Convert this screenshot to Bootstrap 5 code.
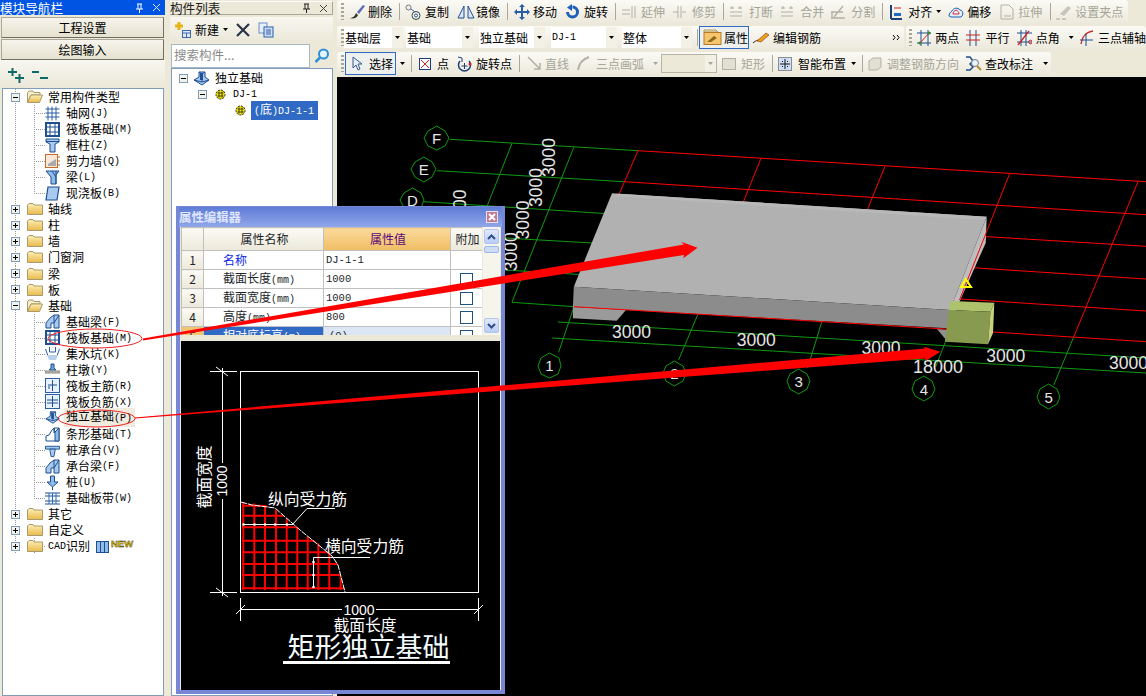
<!DOCTYPE html>
<html lang="zh-CN"><head><meta charset="utf-8"><title>构件</title>
<link href="https://cdn.jsdelivr.net/npm/bootstrap@5.3.0/dist/css/bootstrap.min.css" rel="stylesheet">
<style>
html,body{margin:0;height:696px;overflow:hidden}
body{background:#ece9d8;color:#000;font:12px/16px "Noto Sans CJK SC","Liberation Sans",sans-serif;position:relative}
.shell{width:1146px;height:696px}
.lt{font:10px/16px "Liberation Mono",monospace}
.g1{margin-left:1px}.g2{margin-left:2px}.g3{margin-left:3px}.g4{margin-left:4px}.g5{margin-left:5px}.g6{margin-left:6px}.g7{margin-left:7px}.g8{margin-left:8px}.g9{margin-left:9px}.g10{margin-left:10px}.g26{margin-left:26px}.g63{margin-left:63px}
.mt-tiny{margin-top:1px}
.leftp{width:165px;flex:none}.midp{width:163px;flex:none;margin-left:5px}.mainp{width:809px;flex:none;margin-left:4px}
.ttl{height:15px;background:#0054e3;color:#fff;font-size:12.6px;line-height:15px}
.ttl2{height:14px;margin-top:1px;background:#ece9d8;border:1px solid #a8a79c;border-top-color:#fff;border-left:0;color:#222;font-size:12.6px;line-height:12px}
.navb{height:21px;margin:2px 1px 0 1px;background:linear-gradient(#f6f4ec,#e6e2d0);border:1px solid #aca899;border-bottom-color:#716f64;border-right-color:#716f64;text-align:center;line-height:19px}
.navb+.navb{margin-top:1px}
.tools{height:28px;padding:2px 7px 0;background:linear-gradient(#f8f7f0,#ebe8d9)}
.tbox{background:#fff;border:1px solid #7f9db9;overflow:hidden;flex:1 1 0;min-height:0}
.lefttree{margin-left:2px;margin-right:1px}
.rw{height:16.05px;line-height:16px;display:flex;align-items:center;white-space:nowrap;background-repeat:no-repeat;
 background-image:repeating-linear-gradient(#9a9a9a 0 1px,transparent 1px 2px),repeating-linear-gradient(#9a9a9a 0 1px,transparent 1px 2px),repeating-linear-gradient(90deg,#9a9a9a 0 1px,transparent 1px 2px);
 background-size:1px 100%,1px 100%,11px 1px;background-position:12px 0,31px 0,31px 8px}
.rw>.lt{margin-top:2px}
.top{background-image:repeating-linear-gradient(#9a9a9a 0 1px,transparent 1px 2px);background-size:1px 100%;background-position:12px 0}
.endr{background-size:1px 100%,1px 9px,11px 1px}
.exp{margin-left:8px;margin-right:7px;flex:none}
.fo{margin-right:5px;flex:none}
.sub{padding-left:42px}.sub svg{margin-right:6px;flex:none}
.hl{background:#efecdf;padding-right:3px;margin-left:-2px;padding-left:2px}
.midtools{height:25px;margin-top:2px;padding:0}
.srch{height:25px;margin-top:1px}
.srchin{width:139px;margin-left:1px;height:24px;background:#fff;border:1px solid #a9b8c8;color:#8a8a8a;font-size:12.5px;line-height:20px;padding-left:2px}
.liw{margin-left:1px;padding-top:1px}
.lr{height:16px;line-height:16px;display:flex;align-items:center;white-space:nowrap}
.lr>.lt{margin-top:1px}
.sel{background:#316ac5;color:#fff;padding:0 3px;margin-left:5px;width:67px}
.tbar{height:25px;display:flex;align-items:center;white-space:nowrap;overflow:hidden;background:linear-gradient(#fbfaf5,#ebe8da);border-radius:3px;flex:none;padding-bottom:2px}
.tb1{width:791px}.tb2a{width:567px}.tb2b{width:240px;margin-left:2px}.tb3{width:714px;height:24px;padding-bottom:1px}
.grip{width:3px;height:17px;margin-left:4px;flex:none;background:repeating-linear-gradient(#a8a696 0 2px,transparent 2px 4px)}
.grip.grip-s{margin-left:3px}
.sepb{width:1px;height:17px;background:#aca899;flex:none}
.dis{color:#a6a598}
.carx{width:5px;height:3px;flex:none;background:#000;clip-path:polygon(0 0,100% 0,50% 100%)}
.carx.dis2{background:#a6a598}
.cmb{height:21px;display:flex;flex:none;background:#fff;padding-left:1px;line-height:21px;overflow:hidden}
.cmb b{font-weight:400;flex:1 1 0}
.cmb b.lt{line-height:21px}
.cmb i{width:11px;background:#f3f1e6;display:flex;align-items:center;justify-content:center}
.c59{width:59px}.c67{width:67px}.c66{width:66px}.c70{width:70px}
.cdis{width:56px;background:#ece9d8;border:1px solid #b7b5a6;height:19px}
.hb{height:23px;display:flex;align-items:center;flex:none;border:1px solid #316ac5;background:#eef0ee}
.hb50{width:50px;padding-left:3px}.hb51{width:51px;padding-left:6px}
.cad{flex:1 1 0;min-height:0;margin-top:1px;background:#000;overflow:hidden}
.cad svg{display:block}
.dlg{position:absolute;left:176px;top:206px;width:329px;height:488px;background:#ece9d8;border:4px solid #7787d6;border-top-width:1px;display:flex;flex-direction:column}
.dlgt{height:20px;flex:none;background:linear-gradient(#5f7cd6,#91a6ea);color:#dfe6fb;font-weight:700;font-size:12.4px;line-height:20px;margin:0 -1px;display:flex;align-items:center;justify-content:space-between}
.dlgx{width:12px;height:12px;background:#c47a90;border:1px solid #e9e3ef;margin-right:4px;display:flex;align-items:center;justify-content:center}
.gridw{height:108px;flex:none;display:flex;overflow:hidden;margin-left:1px}
.gridt{width:301px;flex:none;overflow:hidden;background:#fff}
table.pt{margin:0;width:301px;table-layout:fixed;border-collapse:collapse;--bs-table-bg:transparent}
table.pt td,table.pt th{padding:0 0 0 2px;border:1px solid #c0c0c0;font-weight:400;height:19px;line-height:14px;overflow:hidden;white-space:nowrap;background:#fff;vertical-align:middle}
table.pt .lt{line-height:14px}
table.pt thead th{height:23px;text-align:center;background:linear-gradient(#fbfaf4,#ece8da);font-size:12px}
table.pt thead th.val{background:linear-gradient(#fadb9c,#f1bd63);color:#5c0b7a}
table.pt td.nm{background:linear-gradient(#fbfaf4,#ece8da);text-align:center;padding:0}
table.pt td.onm{background:#f2c46f;text-align:center;padding:0}
table.pt .nameb{color:#0b28e8;padding-left:19px}
table.pt .lab{padding-left:19px}
table.pt td.seln{background:#316ac5;color:#fff;padding-left:19px}
table.pt td.selv{background:#dce6f4;padding-left:5px}
table.pt td.ck{padding:0}
table.pt td.lt{font-size:10.5px}
.cbx{display:block;margin:0 auto;width:13px;height:13px;border:1px solid #1c5180;background:#fff}
.cn{width:22px}.cm{width:120px}.cv{width:127px}.cx{width:32px}
.scrl{width:17px;flex:none;background:#f6f5ec;display:flex;flex-direction:column;padding:2px 1px;margin-left:1px}
.sbtn{height:15px;background:linear-gradient(#e1e9fb,#b9cdf5);border:1px solid #b2c5ee;border-radius:2px;display:flex;align-items:center;justify-content:center;flex:none}
.sthm{height:7px;margin-top:2px;background:#cfdcf8;border:1px solid #9db5e8;border-radius:2px;flex:none}
.dlgpic{flex:1 1 0;min-height:0;margin:6px 1px 0 1px;background:#000;overflow:hidden;width:319px}
.over{position:absolute;left:0;top:0;pointer-events:none}
</style></head>
<body>
<svg width="0" height="0" class="position-absolute">
<defs>
<linearGradient id="fg" x1="0" y1="0" x2="0" y2="1"><stop offset="0" stop-color="#fdf0b8"/><stop offset="1" stop-color="#e9b94a"/></linearGradient>
<symbol id="plus" viewBox="0 0 9 9"><rect x=".5" y=".5" width="8" height="8" fill="#f3f3ec" stroke="#7f9db9"/><path d="M2 4.5h5M4.5 2v5" stroke="#000"/></symbol>
<symbol id="minus" viewBox="0 0 9 9"><rect x=".5" y=".5" width="8" height="8" fill="#f3f3ec" stroke="#7f9db9"/><path d="M2 4.5h5" stroke="#000"/></symbol>
<symbol id="fc" viewBox="0 0 16 14"><path d="M.5 3V12.5H15.5V3H7L6 1.5H2L.5 3Z" fill="url(#fg)" stroke="#a89a6a"/></symbol>
<symbol id="fop" viewBox="0 0 16 14"><path d="M.5 2.5 2 1h4l1 1.5h6V5H4L.5 12.5Z" fill="#f6eec8" stroke="#a89a6a"/><path d="M.5 12.5 4 5H15.5L12.5 12.5Z" fill="url(#fg)" stroke="#a89a6a"/></symbol>
<symbol id="i-grid" viewBox="0 0 15 15"><path d="M.5 3h14M.5 7h14M.5 11h14M3 .5v14M7 .5v14M11 .5v14" stroke="#2a5da8" fill="none"/></symbol>
<symbol id="i-raft" viewBox="0 0 15 15"><rect x="1" y="1" width="13" height="13" fill="#fff" stroke="#1d4f91" stroke-width="2"/><path d="M5 1v13M10 1v13M1 5h13M1 10h13" stroke="#1d4f91"/></symbol>
<symbol id="i-col" viewBox="0 0 15 15"><path d="M1 1h13v3l-4 2v8H5V6L1 4Z" fill="#a8caee" stroke="#1d4f91"/><path d="M1 3.500h13" stroke="#1d4f91"/></symbol>
<symbol id="i-wall" viewBox="0 0 15 15"><rect x=".5" y=".5" width="12" height="13" fill="#f7e8da" stroke="#c96a2a"/><path d="M3 10l8-5v7H3Z" fill="#aaa"/><path d="M13 3h2M13 7h2M13 11h2" stroke="#c96a2a"/></symbol>
<symbol id="i-beam" viewBox="0 0 15 15"><path d="M1 1h13L11 5v9H6V7Z" fill="#8fbce8" stroke="#1d4f91"/><path d="M11 1v13M7 1l4 6" stroke="#1d4f91"/></symbol>
<symbol id="i-slab" viewBox="0 0 15 15"><path d="M3 1h11l-2 13H1Z" fill="#a8caee" stroke="#1d4f91" stroke-width="1.200"/></symbol>
<symbol id="i-fb" viewBox="0 0 15 15"><path d="M1 14V9L5 4 9 1h5v13H9V9H6v5Z" fill="#a8caee" stroke="#1d4f91"/><path d="M9 1v8M14 1 9 9" stroke="#1d4f91"/></symbol>
<symbol id="i-pit" viewBox="0 0 15 15"><path d="M.5 3 3 10h9l2.500-7M4.500 1v5h6V1" fill="none" stroke="#2a5da8"/><path d="M2 9h11l-2 5H4Z" fill="#b7d0ee"/></symbol>
<symbol id="i-pier" viewBox="0 0 15 15"><path d="M6 2h3v4l2 2H4l2-2Z" fill="#6ea3da" stroke="#1d4f91"/><path d="M0 9h15v2H0Z" fill="#c2c0b0" stroke="#8a8a80"/></symbol>
<symbol id="i-mr" viewBox="0 0 15 15"><rect x=".5" y=".5" width="14" height="14" fill="#e7f0fb" stroke="#2a5da8"/><path d="M7.500 2v11M3 7h9M4 11V8" stroke="#1d4f91" fill="none"/></symbol>
<symbol id="i-nr" viewBox="0 0 15 15"><rect x=".5" y=".5" width="14" height="14" fill="#e7f0fb" stroke="#2a5da8"/><path d="M7.500 2v11M2 6h11M2 9h11" stroke="#1d4f91"/></symbol>
<symbol id="i-iso" viewBox="0 0 17 15"><path d="M1 9 6 6v-5h6v5l4 3-7 5Z" fill="#a8caee" stroke="#1d4f91"/><path d="M6 1l3 2 3-2M9 3v8M1 9l8 2 7-2" stroke="#1d4f91" fill="none"/><path d="M7 2h3v7H7Z" fill="#1d4f91"/></symbol>
<symbol id="i-str" viewBox="0 0 15 15"><path d="M1 14V9L4 8 7 3 9 1h5v13H1" fill="#fff" stroke="#1d4f91"/><path d="M9 1v5l5-5v13h-4V6Z" fill="#8fbce8" stroke="#1d4f91"/></symbol>
<symbol id="i-pc" viewBox="0 0 16 15"><path d="M.5 3h15v3H.5Z" fill="#a8caee" stroke="#1d4f91"/><path d="M5 6h6L9.500 14h-3Z" fill="#a8caee" stroke="#1d4f91"/></symbol>
<symbol id="i-pile" viewBox="0 0 15 15"><path d="M5.500 1h4v6H13l-5.500 5L2 7h3.500Z" fill="#8fbce8" stroke="#1d4f91"/><path d="M7.500 12v3" stroke="#1d4f91"/></symbol>
<symbol id="i-band" viewBox="0 0 15 15"><path d="M0 2h15M0 13h15M0 5h15M0 10h15" stroke="#1d4f91"/><path d="M4 2v11M7.500 2v11M11 2v11" stroke="#2a6ab8"/></symbol>
<symbol id="gear" viewBox="0 0 11 11"><circle cx="5.500" cy="5.500" r="4.500" fill="#f6e800" stroke="#222" stroke-dasharray="2 1"/><path d="M2.500 4h6M2.500 7h6M4 2.500v6M7 2.500v6" stroke="#222" stroke-width=".8"/></symbol>
</defs></svg>

<div class="shell d-flex">
 <div class="leftp d-flex flex-column">
  <div class="ttl d-flex justify-content-between"><span>模块导航栏</span>
   <span class="d-flex align-items-center gap-2 pe-1"><svg width="9" height="10"><path d="M2 1h5M3 1v5M6 1v5M1 6h7M4.500 6v4" stroke="#fff"/></svg><svg width="9" height="9"><path d="M1 1l7 7M8 1 1 8" stroke="#dfe9fb"/></svg></span></div>
  <div class="navb">工程设置</div>
  <div class="navb">绘图输入</div>
  <div class="tools d-flex align-items-center gap-2">
   <svg width="17" height="16"><path d="M1 5h9M5.500 1v8M8 11h9M12.500 7v9" stroke="#0d6a6a" stroke-width="2"/></svg>
   <svg width="16" height="16"><path d="M0 5h7M8 11h8" stroke="#0d6a6a" stroke-width="2"/></svg>
  </div>
  <div class="tbox lefttree">
   <div class="rw top"><svg class="exp" width="9" height="9"><use href="#minus"/></svg><svg class="fo" width="16" height="14"><use href="#fop"/></svg>常用构件类型</div>
   <div class="rw sub"><svg width="15" height="15"><use href="#i-grid"/></svg>轴网<span class="lt">(J)</span></div>
   <div class="rw sub"><svg width="15" height="15"><use href="#i-raft"/></svg>筏板基础<span class="lt">(M)</span></div>
   <div class="rw sub"><svg width="15" height="15"><use href="#i-col"/></svg>框柱<span class="lt">(Z)</span></div>
   <div class="rw sub"><svg width="15" height="15"><use href="#i-wall"/></svg>剪力墙<span class="lt">(Q)</span></div>
   <div class="rw sub"><svg width="15" height="15"><use href="#i-beam"/></svg>梁<span class="lt">(L)</span></div>
   <div class="rw sub endr"><svg width="15" height="15"><use href="#i-slab"/></svg>现浇板<span class="lt">(B)</span></div>
   <div class="rw top"><svg class="exp" width="9" height="9"><use href="#plus"/></svg><svg class="fo" width="16" height="14"><use href="#fc"/></svg>轴线</div>
   <div class="rw top"><svg class="exp" width="9" height="9"><use href="#plus"/></svg><svg class="fo" width="16" height="14"><use href="#fc"/></svg>柱</div>
   <div class="rw top"><svg class="exp" width="9" height="9"><use href="#plus"/></svg><svg class="fo" width="16" height="14"><use href="#fc"/></svg>墙</div>
   <div class="rw top"><svg class="exp" width="9" height="9"><use href="#plus"/></svg><svg class="fo" width="16" height="14"><use href="#fc"/></svg>门窗洞</div>
   <div class="rw top"><svg class="exp" width="9" height="9"><use href="#plus"/></svg><svg class="fo" width="16" height="14"><use href="#fc"/></svg>梁</div>
   <div class="rw top"><svg class="exp" width="9" height="9"><use href="#plus"/></svg><svg class="fo" width="16" height="14"><use href="#fc"/></svg>板</div>
   <div class="rw top"><svg class="exp" width="9" height="9"><use href="#minus"/></svg><svg class="fo" width="16" height="14"><use href="#fop"/></svg>基础</div>
   <div class="rw sub"><svg width="15" height="15"><use href="#i-fb"/></svg>基础梁<span class="lt">(F)</span></div>
   <div class="rw sub"><svg width="15" height="15"><use href="#i-raft"/></svg>筏板基础<span class="lt">(M)</span></div>
   <div class="rw sub"><svg width="15" height="15"><use href="#i-pit"/></svg>集水坑<span class="lt">(K)</span></div>
   <div class="rw sub"><svg width="15" height="15"><use href="#i-pier"/></svg>柱墩<span class="lt">(Y)</span></div>
   <div class="rw sub"><svg width="15" height="15"><use href="#i-mr"/></svg>筏板主筋<span class="lt">(R)</span></div>
   <div class="rw sub"><svg width="15" height="15"><use href="#i-nr"/></svg>筏板负筋<span class="lt">(X)</span></div>
   <div class="rw sub"><svg width="15" height="15"><use href="#i-iso"/></svg><span class="hl">独立基础<span class="lt">(P)</span></span></div>
   <div class="rw sub"><svg width="15" height="15"><use href="#i-str"/></svg>条形基础<span class="lt">(T)</span></div>
   <div class="rw sub"><svg width="15" height="15"><use href="#i-pc"/></svg>桩承台<span class="lt">(V)</span></div>
   <div class="rw sub"><svg width="15" height="15"><use href="#i-fb"/></svg>承台梁<span class="lt">(F)</span></div>
   <div class="rw sub"><svg width="15" height="15"><use href="#i-pile"/></svg>桩<span class="lt">(U)</span></div>
   <div class="rw sub endr"><svg width="15" height="15"><use href="#i-band"/></svg>基础板带<span class="lt">(W)</span></div>
   <div class="rw top"><svg class="exp" width="9" height="9"><use href="#plus"/></svg><svg class="fo" width="16" height="14"><use href="#fc"/></svg>其它</div>
   <div class="rw top"><svg class="exp" width="9" height="9"><use href="#plus"/></svg><svg class="fo" width="16" height="14"><use href="#fc"/></svg>自定义</div>
   <div class="rw"><svg class="exp" width="9" height="9"><use href="#plus"/></svg><svg class="fo" width="16" height="14"><use href="#fc"/></svg><span class="lt">CAD</span>识别<svg class="g6" width="38" height="16" viewBox="0 0 38 16"><rect x=".5" y="3.500" width="12" height="11" fill="#8fbce8" stroke="#1d4f91"/><path d="M4.500 4v10M8.500 4v10" stroke="#1d4f91"/><text x="15" y="9" font-family="Liberation Sans" font-size="9.500" font-weight="700" fill="#ffd800" stroke="#000" stroke-width=".35">NEW</text></svg></div>
  </div>
 </div>

 <div class="midp d-flex flex-column">
  <div class="ttl2 d-flex justify-content-between"><span>构件列表</span>
   <span class="d-flex align-items-center gap-2 pe-1"><svg width="9" height="10"><path d="M2 1h5M3 1v5M6 1v5M1 6h7M4.500 6v4" stroke="#222"/></svg><svg width="9" height="9"><path d="M1 1l7 7M8 1 1 8" stroke="#444"/></svg></span></div>
  <div class="d-flex align-items-center tools midtools">
   <svg class="ms-1" width="17" height="16"><path d="M1 4h8M5 0v8" stroke="#e4b514" stroke-width="3"/><rect x="8.500" y="8.500" width="8" height="7" fill="#dfe9f8" stroke="#3a68a8"/><path d="M9 11h7M12.500 11v4" stroke="#3a68a8"/></svg>
   <span class="ms-1">新建</span><span class="carx ms-1"></span>
   <svg class="ms-2" width="14" height="14"><path d="M1 1l12 12M13 1 1 13" stroke="#2a3348" stroke-width="2.200"/></svg>
   <svg class="ms-2" width="16" height="16"><rect x="1" y="1" width="8" height="10" fill="#e7effb" stroke="#6b8fc2"/><rect x="6" y="5" width="9" height="10" fill="#cfe0f6" stroke="#2a5da8"/><path d="M8 8h5M8 10h5M8 12h5" stroke="#2a5da8"/></svg>
  </div>
  <div class="srch d-flex align-items-center"><div class="srchin">搜索构件...</div>
   <svg class="ms-1" width="16" height="16"><circle cx="9.500" cy="6" r="4.500" fill="#e6f4ff" stroke="#2d8fd6" stroke-width="2"/><path d="M6 9.500 1.500 14" stroke="#2d8fd6" stroke-width="2.500"/></svg></div>
  <div class="tbox liw">
   <div class="lr"><svg class="g7" width="9" height="9"><use href="#minus"/></svg><svg class="g5" width="17" height="15"><use href="#i-iso"/></svg><span class="g5">独立基础</span></div>
   <div class="lr"><svg class="g26" width="9" height="9"><use href="#minus"/></svg><svg class="g8" width="11" height="11"><use href="#gear"/></svg><span class="lt g7">DJ-1</span></div>
   <div class="lr"><svg class="g63" width="11" height="11"><use href="#gear"/></svg><span class="sel"><span class="lt">(</span>底<span class="lt">)DJ-1-1</span></span></div>
  </div>
 </div>

 <div class="mainp d-flex flex-column">
  <div class="tbar tb1">
   <span class="grip"></span>
   <svg class="g4" width="17" height="17"><path d="M1 15c4 0 6-2 7-5l2 2c-1 3-4 4-9 3Z" fill="#333"/><path d="M9 9 15 2l2 1-6 8Z" fill="#5a6fb8"/></svg><span class="g3">删除</span>
   <span class="sepb g7"></span>
   <svg class="g5" width="16" height="16"><circle cx="3.500" cy="3.500" r="2.500" fill="none" stroke="#777"/><circle cx="11" cy="11.500" r="4" fill="none" stroke="#444"/><path d="M6 5l4 3" stroke="#2a5da8"/><circle cx="11" cy="11.500" r="1.500" fill="none" stroke="#2a5da8"/></svg><span class="g4">复制</span>
   <svg class="g8" width="18" height="16"><path d="M7 2v12H1ZM11 2v12h6Z" fill="#dbe7f7" stroke="#1d4f91"/></svg><span class="g1">镜像</span>
   <span class="sepb g7"></span>
   <svg class="g6" width="16" height="16"><path d="M8 0 11 3H9v4h4V5l3 3-3 3V9H9v4h2l-3 3-3-3h2V9H3v2L0 8l3-3v2h4V3H5Z" fill="#2a5da8"/></svg><span class="g3">移动</span>
   <svg class="g9" width="13" height="16"><path d="M6.500 3a5 5 0 1 1-5 5" fill="none" stroke="#1d5fb8" stroke-width="3"/><path d="M6 0v7L1 3.500Z" fill="#1d5fb8"/></svg><span class="g5">旋转</span>
   <span class="sepb g7"></span>
   <svg class="g6" width="14" height="14"><path d="M0 5h8M0 9h8M10 1v12M13 1v12" stroke="#b3b1a4" fill="none"/></svg><span class="g5 dis">延伸</span>
   <svg class="g8" width="13" height="14"><path d="M5 1v12M8 1v12M0 7h5M9 7h4" stroke="#b3b1a4"/></svg><span class="g6 dis">修剪</span>
   <span class="sepb g7"></span>
   <svg class="g5" width="14" height="14"><path d="M1 3h4M9 3h4M1 7h12M1 11h12M3 1v3M11 1v3" stroke="#b3b1a4"/></svg><span class="g6 dis">打断</span>
   <svg class="g7" width="14" height="14"><path d="M1 3h4M9 3h4M1 7h12M1 11h12M3 1v3M11 1v3" stroke="#b3b1a4"/></svg><span class="g6 dis">合并</span>
   <svg class="g6" width="16" height="14"><path d="M1 13h14M1 7h12M2 7v6M13 1 4 12" stroke="#b3b1a4" stroke-width="1.300"/></svg><span class="g5 dis">分割</span>
   <span class="sepb g7"></span>
   <svg class="g7" width="12" height="16"><path d="M1 1v14M1 15h11" stroke="#1d3f7a" stroke-width="2"/><rect x="4" y="9" width="7" height="3" fill="#1d6ac0"/><path d="M4 4h7" stroke="#c22"/></svg><span class="g6">对齐</span><span class="carx g4"></span>
   <svg class="g7" width="16" height="14"><path d="M1 11c0-3 2-4 3-5 1-3 6-4 8-1 3 0 4 5 1 7H3Z" fill="#dff0fb" stroke="#1d5fb8"/><path d="M5 9c0-2 1-3 3-4 2 1 3 2 3 4Z" fill="none" stroke="#d23"/></svg><span class="g3">偏移</span>
   <svg class="g9" width="15" height="16"><path d="M1 1h8l4 4v10H1Z" fill="none" stroke="#b3b1a4"/><path d="M4 12h7" stroke="#b3b1a4"/></svg><span class="g3 dis">拉伸</span>
   <span class="sepb g8"></span>
   <svg class="g5" width="16" height="16"><path d="M4 10 12 2l3 2-7 8Z" fill="#c8c6b8"/><path d="M0 15h4M6 15h4" stroke="#a6a598"/></svg><span class="g3 dis">设置夹点</span>
  </div>
  <div class="d-flex mt-tiny">
   <div class="tbar tb2a">
    <span class="grip"></span>
    <span class="cmb c59"><b>基础层</b><i><span class="carx"></span></i></span>
    <span class="cmb c67 g3"><b>基础</b><i><span class="carx"></span></i></span>
    <span class="cmb c66 g6"><b>独立基础</b><i><span class="carx"></span></i></span>
    <span class="cmb c66 g6"><b class="lt">DJ-1</b><i><span class="carx"></span></i></span>
    <span class="cmb c70 g5"><b>整体</b><i><span class="carx"></span></i></span>
    <span class="sepb g5"></span>
    <span class="hb hb50 g1"><svg width="19" height="17"><path d="M1 1h12l2 2H1Z" fill="#f4e6b0" stroke="#a89a6a"/><rect x="1" y="3.500" width="17" height="12" fill="#f7c56b" stroke="#b07a28"/><path d="M4 13 11 7l3 2-6 4Z" fill="#8a6a20"/></svg><span class="g2">属性</span></span>
    <svg class="g4" width="17" height="14"><path d="M0 12c3-3 6-3 8-3" stroke="#222" fill="none"/><path d="M4 10 13 2l3 2-8 7Z" fill="#e4a21c" stroke="#a02a10" stroke-width=".6"/></svg><span class="g3">编辑钢筋</span>
    <svg class="ms-auto me-1" width="8" height="7"><path d="M1 1l2 2.500-2 2.500M5 1l2 2.500-2 2.500" stroke="#000" fill="none"/></svg>
   </div>
   <div class="tbar tb2b">
    <span class="grip grip-s"></span>
    <svg class="g5" width="15" height="16"><path d="M4 0v16M11 0v16M0 3h15M0 13h15" stroke="#1d4f91"/><path d="M2 14 13 2" stroke="#c22"/><circle cx="3" cy="13" r="1.600" fill="#3a8a2a"/><circle cx="12" cy="3" r="1.600" fill="#3a8a2a"/></svg><span class="g4">两点</span>
    <svg class="g7" width="14" height="16"><path d="M4 0v16M10 0v16" stroke="#1d4f91"/><path d="M0 5h14M0 10h14" stroke="#c22"/></svg><span class="g6">平行</span>
    <svg class="g7" width="16" height="16"><path d="M4 0v16M9 0v16M0 3h15M0 12h15" stroke="#1d4f91"/><path d="M1 15 12 1" stroke="#c22" stroke-width="1.300"/><circle cx="13.500" cy="12" r="1.800" fill="none" stroke="#c22"/></svg><span class="g4">点角</span>
    <span class="carx g9"></span>
    <svg class="g6" width="14" height="16"><path d="M1 14C2 6 6 2 13 1" fill="none" stroke="#c22" stroke-width="1.300"/><path d="M6 4v12M0 10h14" stroke="#1d4f91"/></svg><span class="g5">三点辅轴</span>
   </div>
  </div>
  <div class="tbar tb3 mt-tiny">
   <span class="grip"></span>
   <span class="hb hb51 g1"><svg width="11" height="15"><path d="M1 1v11l3-3 2 5 2-1-2-5h4Z" fill="#e9eef7" stroke="#3a5a90"/></svg><span class="g6">选择</span></span>
   <span class="carx g4"></span><span class="sepb g6"></span>
   <svg class="g7" width="12" height="12"><rect x=".5" y=".5" width="11" height="11" fill="#fff" stroke="#1d3f7a"/><path d="M2 2l8 8M10 2l-8 8" stroke="#c22"/></svg><span class="g6">点</span>
   <svg class="g8" width="15" height="16"><path d="M3 5a6 6 0 1 0 9 0" fill="none" stroke="#1d3f7a" stroke-width="1.500"/><path d="M7.500 7v6M4.500 10h6" stroke="#1d3f7a"/><path d="M1 1l4 1v4" fill="none" stroke="#1d3f7a"/><circle cx="13" cy="8" r="1.500" fill="#c22"/></svg><span class="g4">旋转点</span>
   <span class="sepb g7"></span>
   <svg class="g7" width="15" height="15"><path d="M1 1 13 13M13 7v6H7" fill="none" stroke="#b3b1a4" stroke-width="1.500"/></svg><span class="g3 dis">直线</span>
   <svg class="g8" width="13" height="15"><path d="M1 14C2 7 6 3 12 1" fill="none" stroke="#b3b1a4" stroke-width="2"/></svg><span class="g6 dis">三点画弧</span>
   <span class="carx dis2 g9"></span>
   <span class="cmb cdis g3"><b></b><i><span class="carx dis2"></span></i></span>
   <svg class="g5" width="14" height="12"><rect x=".5" y=".5" width="13" height="11" fill="#e2e0d2" stroke="#b3b1a4"/></svg><span class="g5 dis">矩形</span>
   <span class="sepb g7"></span>
   <svg class="g5" width="14" height="14"><rect x=".5" y=".5" width="13" height="13" fill="#cfe0f6" stroke="#333" stroke-dasharray="1 1"/><path d="M7 2v10M2 7h10M4 4l1 1M10 4 9 5M4 10l1-1M10 10 9 9" stroke="#111"/></svg><span class="g6">智能布置</span>
   <span class="carx g5"></span><span class="sepb g6"></span>
   <svg class="g5" width="14" height="14"><path d="M1 4 5 1h8v9l-4 3H1Z" fill="#e2e0d2" stroke="#b3b1a4"/></svg><span class="g5 dis">调整钢筋方向</span>
   <svg class="g6" width="17" height="16"><path d="M1 1h4l3 4-3 3 3 3-3 3H1" fill="none" stroke="#1d4f91" stroke-width="1.500"/><circle cx="10" cy="7" r="3.500" fill="#e7f4fb" stroke="#777"/><path d="M12 10l4 4" stroke="#b08a30" stroke-width="2"/></svg><span class="g3">查改标注</span>
   <span class="carx g10"></span>
  </div>
  <div class="cad">
   <svg width="809" height="619" viewBox="337 77 809 619" font-family="Liberation Sans, sans-serif">
    <g fill="none" stroke="#0f9a12">
     <path d="M450 139.300 638 150.700M437 170.700 624 181.700M424 201.700 612 214M505 238 601 243.500M505 270 588 275M512 302.300 574 306.700"/>
     <path d="M512 143.300 478 229M573.800 147.300 512 302M574 306.700 558.600 352.300M697.600 315 678.600 360M821.400 323 807.600 368M950 330 935.700 366.700M1073.800 336.700 1053.800 385"/>
     <path d="M558 322 1146 358M552 338 1146 373"/>
     <g fill="#000">
      <path d="M549.500 353 559 358 561 366 558 374 549.500 378 541 374 538 366 541 358Z"/>
      <path d="M674.300 361 683 366 686 373 683 381 674.300 386 666 381 663 373 666 366Z"/>
      <path d="M798.600 369 807 374 810 381 807 389 798.600 394 790 389 787 381 790 374Z"/>
      <path d="M923.800 376 932 381 935 389 932 396 923.800 401 915 396 912 389 915 381Z"/>
      <path d="M1048.600 384 1057 389 1060 397 1057 404 1048.600 409 1040 404 1037 397 1040 389Z"/>
      <path d="M436.700 126 445 131 449 138 445 146 436.700 150 428 146 424 138 428 131Z"/>
      <path d="M423.800 157 432 162 436 169 432 177 423.800 182 415 177 411 169 415 162Z"/>
      <path d="M412.400 188 421 193 424 200 421 208 412.400 213 404 208 400 200 404 193Z"/>
     </g>
    </g>
    <g fill="none" stroke="#f00">
     <path d="M638 150.700 1146 181.700M624 181.700 1146 214.700M612 214 1146 246.300M601 243.500 1146 279M588 275 1146 311"/>
     <path d="M638 150.700 610 215M761 158.300 697.600 315M884.800 166.700 821.400 323M1138 181.700 1073.800 336.700"/>
    </g>
    <path d="M612 193.300 986.700 216.700 950 310 573.800 286.700Z" fill="#b1b1b1"/>
    <path d="M618 193.700 986.700 216.700 984 220 612 196Z" fill="#b8b8b8"/>
    <path d="M573.800 286.700 950 310 947.600 328.300 572.900 307Z" fill="#8c8c8c"/>
    <path d="M572.900 307 626 310 616.700 320.700 572.900 318.300Z" fill="#9a9a9a"/>
    <path d="M986.700 216.700 985.700 243 950 323 950 310Z" fill="#bdbdbd"/>
    <path d="M937 329 950 330 947.600 341.700Z" fill="#909090"/>
    <path d="M574 306.700 950 329.300M1009.500 174 959.500 300M950 329.300 1146 341.700" fill="none" stroke="#f00"/>
    <path d="M951 301 994.300 302.700 990.500 311.700 948.600 310Z" fill="#adc36b"/>
    <path d="M948.600 310 990.500 311.700 988 344.300 945 341.700Z" fill="#879a4f"/>
    <path d="M994.300 302.700 993 333 988 344.300 990.500 311.700Z" fill="#c6d47e"/>
    <path d="M965.700 279 961 287 971 287Z" fill="none" stroke="#ffff00" stroke-width="2"/>
    <g fill="#e6e6e6" font-size="18" text-anchor="middle">
     <text x="631.400" y="338" textLength="39" lengthAdjust="spacingAndGlyphs">3000</text>
     <text x="756.200" y="345.500" textLength="39" lengthAdjust="spacingAndGlyphs">3000</text>
     <text x="881" y="353.500" textLength="39" lengthAdjust="spacingAndGlyphs">3000</text>
     <text x="1005.700" y="361.500" textLength="39" lengthAdjust="spacingAndGlyphs">3000</text>
     <text x="1128.600" y="369" textLength="39" lengthAdjust="spacingAndGlyphs">3000</text>
     <text x="938" y="373" textLength="50" lengthAdjust="spacingAndGlyphs">18000</text>
     <text transform="translate(554.500 157.500) rotate(-90)" textLength="39" lengthAdjust="spacingAndGlyphs">3000</text>
     <text transform="translate(541.500 187.500) rotate(-90)" textLength="39" lengthAdjust="spacingAndGlyphs">3000</text>
     <text transform="translate(528.500 220) rotate(-90)" textLength="39" lengthAdjust="spacingAndGlyphs">3000</text>
     <text transform="translate(517 251.700) rotate(-90)" textLength="39" lengthAdjust="spacingAndGlyphs">3000</text>
     <text transform="translate(466 209) rotate(-90)" textLength="39" lengthAdjust="spacingAndGlyphs">3000</text>
    </g>
    <g fill="#e6e6e6" font-size="15" text-anchor="middle">
     <text x="549.500" y="371">1</text><text x="674.300" y="379">2</text><text x="798.600" y="387">3</text><text x="923.800" y="395">4</text><text x="1048.600" y="403">5</text>
     <text x="436.700" y="143.500">F</text><text x="423.800" y="174.500">E</text><text x="412.400" y="205.500">D</text>
    </g>
   </svg>
  </div>
 </div>
</div>

<div class="dlg">
 <div class="dlgt"><span>属性编辑器</span><span class="dlgx"><svg width="8" height="8"><path d="M1 1l6 6M7 1 1 7" stroke="#fff" stroke-width="2"/></svg></span></div>
 <div class="gridw">
  <div class="gridt">
   <table class="table pt">
    <colgroup><col class="cn"><col class="cm"><col class="cv"><col class="cx"></colgroup>
    <thead><tr><th></th><th>属性名称</th><th class="val">属性值</th><th>附加</th></tr></thead>
    <tbody>
     <tr><td class="nm">1</td><td class="nameb">名称</td><td class="lt">DJ-1-1</td><td></td></tr>
     <tr><td class="nm">2</td><td class="lab">截面长度<span class="lt">(mm)</span></td><td class="lt">1000</td><td class="ck"><span class="cbx"></span></td></tr>
     <tr><td class="nm">3</td><td class="lab">截面宽度<span class="lt">(mm)</span></td><td class="lt">1000</td><td class="ck"><span class="cbx"></span></td></tr>
     <tr><td class="nm">4</td><td class="lab">高度<span class="lt">(mm)</span></td><td class="lt">800</td><td class="ck"><span class="cbx"></span></td></tr>
     <tr><td class="onm">5</td><td class="seln">相对底标高<span class="lt">(m)</span></td><td class="selv lt">(0)</td><td class="ck"><span class="cbx"></span></td></tr>
    </tbody>
   </table>
  </div>
  <div class="scrl">
   <span class="sbtn"><svg width="9" height="6"><path d="M1 5l3.500-3.500L8 5" fill="none" stroke="#2f4c8c" stroke-width="2"/></svg></span>
   <span class="sthm"></span>
   <span class="sbtn mt-auto"><svg width="9" height="6"><path d="M1 1l3.500 3.500L8 1" fill="none" stroke="#2f4c8c" stroke-width="2"/></svg></span>
  </div>
 </div>
 <div class="dlgpic">
  <svg width="319" height="349" viewBox="181 341 319 349" font-family="Liberation Sans, Noto Sans CJK SC, sans-serif">
   <rect x="240.500" y="371.500" width="238" height="221" fill="none" stroke="#fff"/>
   <defs><clipPath id="hc"><path d="M242 502 265 505 275 509 298 528 308 537 318 543 332 555 338 565 345 591H242Z"/></clipPath></defs>
   <g clip-path="url(#hc)" stroke="#f00" stroke-width="2">
    <path d="M243.300 500V590M254.300 500V590M265 500V590M276 500V590M286.700 500V590M297.300 500V590M307.700 500V590M318.300 500V590M329.300 500V590M340.700 500V590"/>
    <path d="M242 505.700H346M242 515.700H346M242 527.300H346M242 540.700H346M242 552.300H346M242 564H346M242 575H346M242 588.300H346"/>
   </g>
   <path d="M241 502 252 505 275 508 300 530 332 556 338 565 345 592" fill="none" stroke="#fff" stroke-dasharray="6 1"/>
   <path d="M243 524.500H292M292 525 307 508.500H335M313.500 588V557.500H370" fill="none" stroke="#fff"/>
   <g fill="#fff"><circle cx="243.500" cy="524.500" r="1.300"/><circle cx="254.500" cy="524.500" r="1.300"/><circle cx="265" cy="524.500" r="1.300"/><circle cx="275" cy="524.500" r="1.300"/><circle cx="287" cy="524.500" r="1.300"/><circle cx="313.500" cy="562" r="1.300"/><circle cx="313.500" cy="575" r="1.300"/><circle cx="313.500" cy="587" r="1.300"/></g>
   <path d="M222.500 368V596M210 371.500H237M210 592.500H237M216 367l12 9M216 588l12 9M240.500 598V621M478.500 598V621M240.500 609.500H478.500M236 614l9-9M474 614l9-9" fill="none" stroke="#fff"/>
   <rect x="342" y="601" width="34" height="16" fill="#000"/>
   <rect x="214" y="463" width="16" height="36" fill="#000"/>
   <g fill="#fff" text-anchor="middle">
    <text x="359" y="614.500" font-size="14">1000</text>
    <text transform="translate(227 481) rotate(-90)" font-size="14">1000</text>
    <text x="365" y="631" font-size="15.800">截面长度</text>
    <text transform="translate(210 477) rotate(-90)" font-size="15.800">截面宽度</text>
    <text x="307.500" y="505" font-size="15.800">纵向受力筋</text>
    <text x="364.500" y="552" font-size="15.800">横向受力筋</text>
    <text x="368.500" y="657" font-size="27" fill="#f2fbff">矩形独立基础</text>
   </g>
   <rect x="283" y="661" width="167" height="3" fill="#fff"/>
  </svg>
 </div>
</div>

<svg class="over" width="1146" height="696" viewBox="0 0 1146 696">
 <ellipse cx="95" cy="338.500" rx="47" ry="9.500" fill="none" stroke="#e22"/>
 <ellipse cx="96.500" cy="418.500" rx="38.500" ry="8.500" fill="none" stroke="#e22"/>
 <path d="M143 338.500 684 244.500 681 241.700 697.600 247.700 683.300 258.300 684 255 143 340.500Z" fill="#f00"/>
 <path d="M135 417.500 925 348.500 923.800 346.700 940.500 351.700 926 360.700 925 358.500 135 418.500Z" fill="#f00"/>
</svg>
</body>
</html>
